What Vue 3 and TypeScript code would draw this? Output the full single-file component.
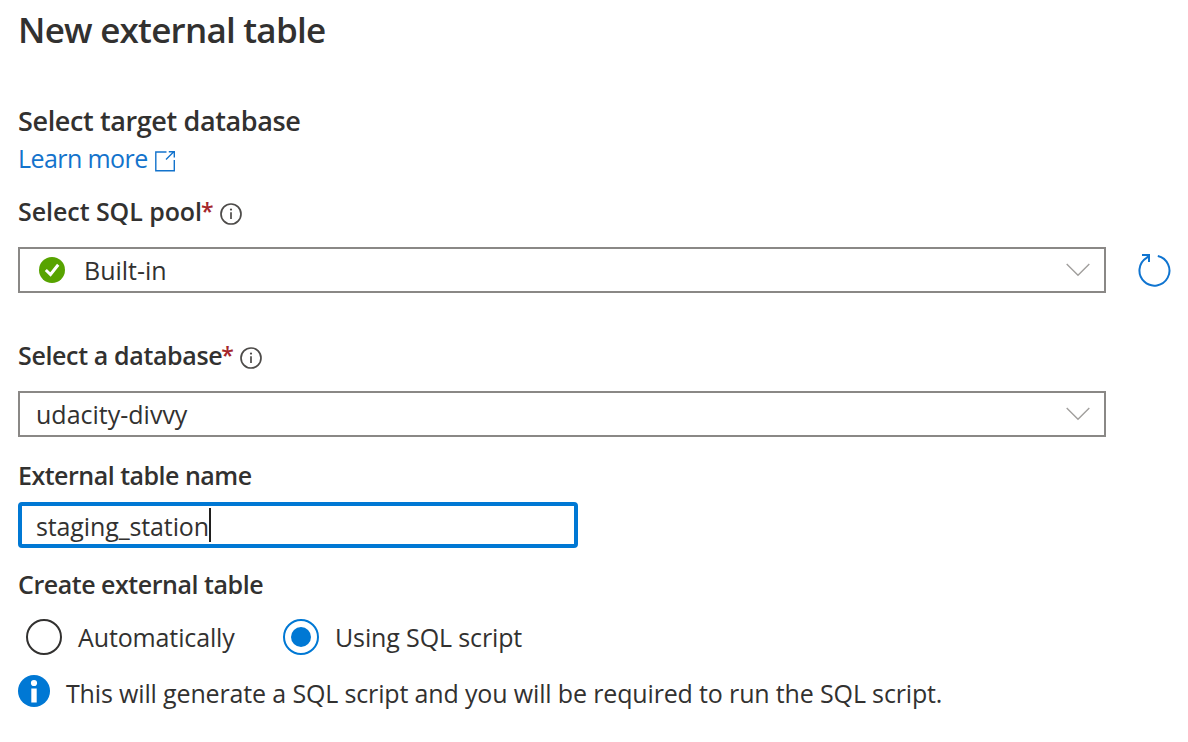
<script setup lang="ts">
import { ref } from 'vue'

type Mode = 'auto' | 'script'

const options: { id: Mode; label: string }[] = [
  { id: 'auto', label: 'Automatically' },
  { id: 'script', label: 'Using SQL script' },
]
const mode = ref<Mode>('script')
const tableName = ref('staging_station')
</script>

<template>
  <main class="panel">
    <h1 class="title">New external table</h1>

    <h2 class="section">Select target database</h2>
    <a class="link">
      <span class="t-learn">Learn more</span>
      <svg class="ext" width="22" height="22" viewBox="0 0 22 22" fill="none" stroke="currentColor" stroke-width="1.4">
        <path d="M12.5 2H1.8V20.7H20.3V10" />
        <path d="M12 9.5L20 1.6M14.8 1.8H20.3V7.5" />
      </svg>
    </a>

    <div class="label pool-label">
      <span>Select SQL pool</span><span class="star">*</span>
      <svg class="info" width="22" height="22" viewBox="0 0 22 22">
        <circle cx="11" cy="11" r="10" fill="none" stroke="#4d4b49" stroke-width="1.7" />
        <path d="M11 9.3V16" stroke="#4d4b49" stroke-width="1.7" />
        <circle cx="11" cy="6.6" r="1.1" fill="#4d4b49" />
      </svg>
    </div>
    <div class="row">
      <div class="select">
        <svg class="ok" width="26" height="26" viewBox="0 0 26 26">
          <circle cx="13" cy="13" r="13" fill="#57a300" />
          <path d="M6.8 13L11.5 17.5L19.2 7.8" fill="none" stroke="#fff" stroke-width="3" />
        </svg>
        <span>Built-in</span>
        <svg class="chevron" width="24" height="14" viewBox="0 0 24 14" fill="none" stroke="#a19f9d" stroke-width="1.4">
          <path d="M.7 1L12 12.3L23.3 1" />
        </svg>
      </div>
      <svg class="refresh" width="34" height="34" viewBox="0 0 34 34" fill="none" stroke="#0f74d0" stroke-width="2">
        <path d="M20.8 3A15 15 0 1 1 9.5 4.9L11.6 3.4" />
        <path d="M5 2H12V9" />
      </svg>
    </div>

    <div class="label db-label">
      <span>Select a database</span><span class="star">*</span>
      <svg class="info" width="22" height="22" viewBox="0 0 22 22">
        <circle cx="11" cy="11" r="10" fill="none" stroke="#4d4b49" stroke-width="1.7" />
        <path d="M11 9.3V16" stroke="#4d4b49" stroke-width="1.7" />
        <circle cx="11" cy="6.6" r="1.1" fill="#4d4b49" />
      </svg>
    </div>
    <div class="select">
      <span>udacity-divvy</span>
      <svg class="chevron" width="24" height="14" viewBox="0 0 24 14" fill="none" stroke="#a19f9d" stroke-width="1.4">
        <path d="M.7 1L12 12.3L23.3 1" />
      </svg>
    </div>

    <div class="label name-label">External table name</div>
    <div class="input">
      <span class="t-staging">{{ tableName }}</span><i class="caret"></i>
    </div>

    <div class="label create-label">Create external table</div>
    <div class="radios">
      <div v-for="o in options" :key="o.id" class="radio" :class="[o.id, { on: mode === o.id }]" @click="mode = o.id">
        <i class="dot"></i><span>{{ o.label }}</span>
      </div>
    </div>

    <div class="notice">
      <svg class="badge" width="32" height="32" viewBox="0 0 32 32">
        <circle cx="16" cy="16" r="16" fill="#0078d4" />
        <circle cx="16" cy="8" r="3.1" fill="#fff" />
        <path d="M13.3 13.5H18.7V27.5H13.3Z" fill="#fff" />
      </svg>
      <span>This will generate a SQL script and you will be required to run the SQL script.</span>
    </div>
  </main>
</template>

<style>
body {
  background: #fff;
}
</style>

<style scoped>
.panel {
  box-sizing: border-box;
  width: 1188px;
  height: 742px;
  padding: 7px 0 0 18px;
  overflow: hidden;
  font-family: 'Open Sans', 'Noto Sans', sans-serif;
  font-size: 25px;
  line-height: 36px;
  color: #323130;
  white-space: nowrap;
}
.title {
  margin: 0;
  font-size: 35px;
  font-weight: 600;
  line-height: 46px;
  letter-spacing: -0.76px;
}
.section {
  margin: 50px 0 0;
  font-size: 27px;
  font-weight: 600;
  line-height: 36px;
  letter-spacing: -0.38px;
}
.link {
  display: flex;
  margin-top: 1px;
  color: #1373cc;
}
.t-learn {
  letter-spacing: -0.58px;
}
.ext {
  margin: 10px 0 0 6px;
}
.label {
  display: flex;
  font-weight: 600;
}
.pool-label {
  margin-top: 17px;
  letter-spacing: -0.06px;
}
.star {
  width: 12px;
  margin-left: -1px;
  color: #a4262c;
  font-size: 23px;
}
.info {
  margin: 10px 0 0 7px;
}
.row {
  display: flex;
  margin-top: 18px;
}
.select {
  display: flex;
  box-sizing: border-box;
  width: 1088px;
  height: 46px;
  padding: 3px 14px 0 16px;
  border: 2px solid #8a8886;
}
.ok {
  margin: 5px 19px 0 3px;
}
.chevron {
  margin: 11px 0 0 auto;
}
.refresh {
  margin: 6px 0 0 31px;
}
.db-label {
  margin-top: 44px;
  letter-spacing: -0.36px;
}
.db-label + .select {
  margin-top: 18px;
}
.name-label {
  margin-top: 20px;
  letter-spacing: -0.5px;
}
.input {
  display: flex;
  box-sizing: border-box;
  width: 560px;
  height: 46px;
  margin-top: 9px;
  padding: 2px 14px 0;
  border: 4px solid #0078d4;
  border-radius: 4px;
}
.t-staging {
  letter-spacing: -0.12px;
}
.caret {
  width: 2px;
  height: 34px;
  background: #201f1e;
}
.create-label {
  margin-top: 18px;
  letter-spacing: -0.46px;
}
.radios {
  display: flex;
  margin-top: 17px;
  padding-left: 8px;
  letter-spacing: -0.13px;
}
.radio {
  display: flex;
}
.radio.auto {
  width: 257px;
}
.dot {
  box-sizing: border-box;
  display: flex;
  width: 36px;
  height: 36px;
  margin-right: 16px;
  border: 2px solid #323130;
  border-radius: 50%;
}
.on .dot {
  border-color: #0078d4;
}
.on .dot::after {
  width: 20px;
  height: 20px;
  margin: auto;
  border-radius: 50%;
  background: #0078d4;
  content: '';
}
.notice {
  display: flex;
  margin-top: 20px;
  letter-spacing: -0.15px;
}
.badge {
  margin-right: 16px;
}
</style>
